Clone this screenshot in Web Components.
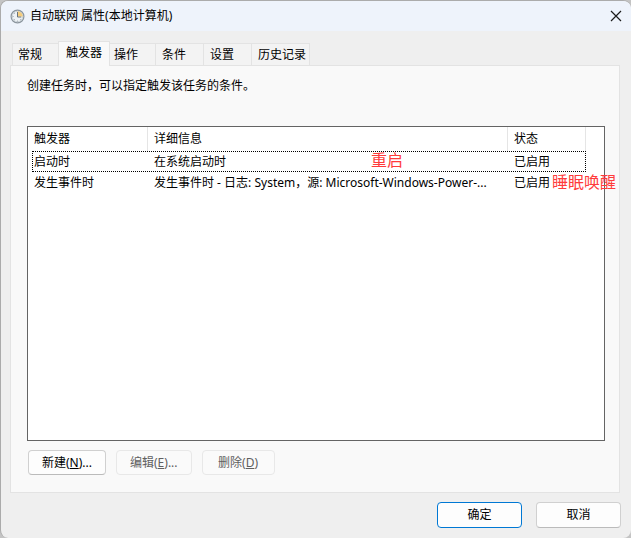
<!DOCTYPE html>
<html lang="zh-CN">
<head>
<meta charset="utf-8">
<title>自动联网 属性(本地计算机)</title>
<style>
    html, body {
        height: 100%;
        margin: 0;
    }
    body {
        background: #c4c4c4;
        color: #000;
        font: 12px/16px "Noto Sans", "Noto Sans CJK SC", sans-serif;
    }
</style>
</head>
<body>
<property-dialog>
    <span slot="title">自动联网 属性(本地计算机)</span>
    <tab-strip slot="tabs" labels="常规,触发器,操作,条件,设置,历史记录" selected="1"></tab-strip>
    <p slot="intro">创建任务时，可以指定触发该任务的条件。</p>
    <trigger-list></trigger-list>
    <dialog-button slot="actions">新建(<u>N</u>)...</dialog-button>
    <dialog-button slot="actions" disabled>编辑(<u>E</u>)...</dialog-button>
    <dialog-button slot="actions" disabled>删除(<u>D</u>)</dialog-button>
    <dialog-button slot="footer" primary>确定</dialog-button>
    <dialog-button slot="footer">取消</dialog-button>
</property-dialog>

<script>
const dialogTemplate = document.createElement('template');
dialogTemplate.innerHTML = `
<style>
    :host {
        display: flex;
        flex-direction: column;
        box-sizing: border-box;
        min-height: 100vh;
        border: 1px solid #ababab;
        border-width: 1px 0 0 1px;
        border-radius: 8px;
        background: #efefef;
        overflow: hidden;
    }
    header {
        display: flex;
        align-items: center;
        gap: 5px;
        height: 30px;
        padding: 0 9px;
        background: #eef3fb;
    }
    header svg {
        display: block;
    }
    .close {
        margin-left: auto;
        padding: 0;
        border: none;
        background: none;
    }
    main {
        flex: 1;
        display: flex;
        flex-direction: column;
        padding: 10px 11px 0 9px;
    }
    section {
        flex: 1;
        display: flex;
        flex-direction: column;
        border: 1px solid #e3e3e3;
        background: #f9f9f9;
        padding: 12px 14px 17px 16px;
    }
    ::slotted(p) {
        margin: 0 0 32px;
    }
    .actions {
        display: flex;
        gap: 10px;
        padding: 9px 1px 0;
    }
    footer {
        display: flex;
        justify-content: flex-end;
        gap: 14px;
        padding: 9px 10px 10px;
        --button-width: 85px;
        --button-height: 26px;
    }
</style>
<header>
    <svg width="15" height="15" viewBox="0 0 15 15" aria-hidden="true">
        <circle cx="7.5" cy="7.5" r="6.4" fill="#e3e9ee" stroke="#8b959d" stroke-width="1.2"/>
        <circle cx="7.5" cy="7.5" r="5.2" fill="#eef2f5" stroke="#c0c9cf" stroke-width=".7"/>
        <path d="M7.5 7.5V2.2A5.3 5.3 0 0 1 12.8 7.5z" fill="#f6cd7c"/>
        <path d="M7.5 3v5h3.8" fill="none" stroke="#6b747b" stroke-width="1"/>
        <path d="M2.6 7.5h1M7.5 11.6v1M4 4l.7.7M4 11l.7-.7M11 11l-.7-.7" stroke="#8b959d" stroke-width=".8"/>
    </svg>
    <slot name="title"></slot>
    <button class="close" aria-label="关闭">
        <svg width="12" height="12" viewBox="0 0 12 12"><path d="M1 1l10 10M11 1L1 11" stroke="#1b1b1b" stroke-width="1.2"/></svg>
    </button>
</header>
<main>
    <slot name="tabs"></slot>
    <section>
        <slot name="intro"></slot>
        <slot></slot>
        <div class="actions"><slot name="actions"></slot></div>
    </section>
</main>
<footer><slot name="footer"></slot></footer>
`;
class PropertyDialog extends HTMLElement {
    constructor () {
        super();
        this.attachShadow({mode: 'open'});
        this.shadowRoot.appendChild(dialogTemplate.content.cloneNode(true));
    }
}

const tabTemplate = document.createElement('template');
tabTemplate.innerHTML = `
<style>
    :host {
        display: flex;
        align-items: flex-end;
        padding-left: 2px;
    }
    button {
        box-sizing: border-box;
        min-width: 48px;
        height: 22px;
        padding: 0 3px 0 6px;
        border: 1px solid #e3e3e3;
        border-width: 1px 1px 0 0;
        background: #f3f3f3;
        color: inherit;
        font: inherit;
        text-align: left;
    }
    style + button {
        border-left-width: 1px;
        padding-left: 5px;
    }
    button[aria-selected="true"] {
        position: relative;
        min-width: 52px;
        height: 25px;
        margin: 0 -2px -1px;
        padding: 0 5px 2px 7px;
        border-left-width: 1px;
        background: #f9f9f9;
    }
</style>
`;
class TabStrip extends HTMLElement {
    constructor () {
        super();
        this.attachShadow({mode: 'open'});
        this.shadowRoot.appendChild(tabTemplate.content.cloneNode(true));
    }

    connectedCallback () {
        this.setAttribute("role", "tablist");
        this.getAttribute("labels").split(",").forEach((label, i) => {
            const tab = document.createElement("button");
            tab.textContent = label;
            tab.setAttribute("role", "tab");
            tab.setAttribute("aria-selected", i === this.selected);
            tab.addEventListener("click", () => this.select(i));
            this.shadowRoot.appendChild(tab);
        });
    }

    select (index) {
        this.shadowRoot.querySelectorAll("button").forEach((tab, i) => {
            tab.setAttribute("aria-selected", i === index);
        });
    }

    get selected () {
        return Number(this.getAttribute("selected") || 0);
    }
}

const listTemplate = document.createElement('template');
listTemplate.innerHTML = `
<style>
    :host {
        flex: 1;
        display: block;
        border: 1px solid #646464;
        background: #fff;
        padding: 0 18px 0 4px;
    }
    table {
        width: 100%;
        table-layout: fixed;
        border-spacing: 0;
    }
    .name {
        width: 116px;
    }
    .state {
        width: 78px;
    }
    th, td {
        box-sizing: border-box;
        padding: 0 6px;
        font-weight: normal;
        text-align: left;
        white-space: nowrap;
    }
    th {
        height: 24px;
        border-right: 1px solid #e5e5e5;
    }
    td {
        position: relative;
        height: 22px;
    }
    th:first-child, td:first-child {
        padding-left: 2px;
    }
    .focused {
        outline: 1px dotted #000;
        outline-offset: -1px;
    }
    .focused td {
        height: 21px;
    }
    /* notes written over the rows */
    .note {
        position: absolute;
        top: 0;
        color: #ff3b3b;
        font-size: 16px;
        line-height: 20px;
    }
    .restart {
        left: 223px;
        top: -1px;
    }
    .wake {
        left: 44px;
    }
</style>
<table>
    <thead>
        <tr><th class="name">触发器</th><th>详细信息</th><th class="state">状态</th></tr>
    </thead>
    <tbody>
        <tr class="focused">
            <td>启动时</td>
            <td>在系统启动时<span class="note restart">重启</span></td>
            <td>已启用</td>
        </tr>
        <tr>
            <td>发生事件时</td>
            <td>发生事件时 - 日志: System，源: Microsoft-Windows-Power-...</td>
            <td>已启用<span class="note wake">睡眠唤醒</span></td>
        </tr>
    </tbody>
</table>
`;
class TriggerList extends HTMLElement {
    constructor () {
        super();
        this.attachShadow({mode: 'open'});
        this.shadowRoot.appendChild(listTemplate.content.cloneNode(true));
    }
}

const buttonTemplate = document.createElement('template');
buttonTemplate.innerHTML = `
<style>
    :host {
        display: block;
    }
    button {
        box-sizing: border-box;
        min-width: var(--button-width, 73px);
        height: var(--button-height, 25px);
        padding: 0 13px;
        border: 1px solid #d0d0d0;
        border-bottom-color: #bbb;
        border-radius: 4px;
        background: #fdfdfd;
        color: #000;
        font: inherit;
    }
    button:disabled {
        border-color: #e8e8e8;
        background: #fafafa;
        color: #606060;
    }
    :host([primary]) button {
        border-color: #0078d4;
    }
</style>
<button><slot></slot></button>
`;
class DialogButton extends HTMLElement {
    constructor () {
        super();
        this.attachShadow({mode: 'open'});
        this.shadowRoot.appendChild(buttonTemplate.content.cloneNode(true));
        this._button = this.shadowRoot.querySelector("button");
    }

    connectedCallback () {
        this._button.disabled = this.hasAttribute("disabled");
    }
}

customElements.define('property-dialog', PropertyDialog);
customElements.define('tab-strip', TabStrip);
customElements.define('trigger-list', TriggerList);
customElements.define('dialog-button', DialogButton);
</script>
</body>
</html>
